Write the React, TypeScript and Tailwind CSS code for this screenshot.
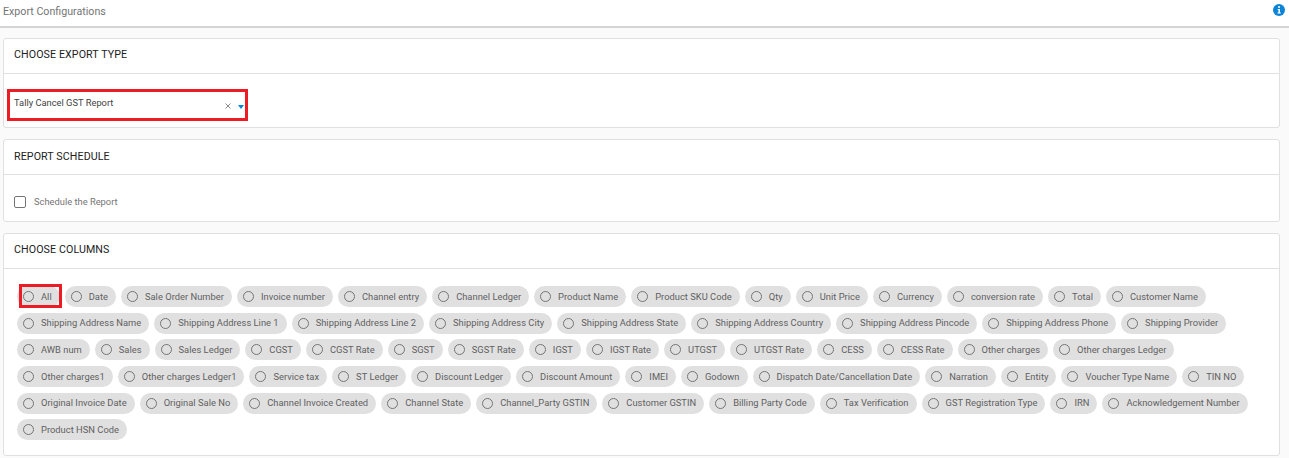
const rows = [
  ["All","Date","Sale Order Number","Invoice number","Channel entry","Channel Ledger","Product Name","Product SKU Code","Qty","Unit Price","Currency","conversion rate","Total","Customer Name"],
  ["Shipping Address Name","Shipping Address Line 1","Shipping Address Line 2","Shipping Address City","Shipping Address State","Shipping Address Country","Shipping Address Pincode","Shipping Address Phone","Shipping Provider"],
  ["AWB num","Sales","Sales Ledger","CGST","CGST Rate","SGST","SGST Rate","IGST","IGST Rate","UTGST","UTGST Rate","CESS","CESS Rate","Other charges","Other charges Ledger"],
  ["Other charges1","Other charges Ledger1","Service tax","ST Ledger","Discount Ledger","Discount Amount","IMEI","Godown","Dispatch Date/Cancellation Date","Narration","Entity","Voucher Type Name","TIN NO"],
  ["Original Invoice Date","Original Sale No","Channel Invoice Created","Channel State","Channel_Party GSTIN","Customer GSTIN","Billing Party Code","Tax Verification","GST Registration Type","IRN","Acknowledgement Number"],
  ["Product HSN Code"],
];

function Chip({ label, boxed }: { label: string; boxed?: boolean }) {
  return (
    <div className="relative flex h-[21px] items-center rounded-full bg-[#e0e0e0] pl-[6px] pr-[8px]">
      <span className="mr-[7px] h-[11px] w-[11px] rounded-full border border-[#757575]" />
      <span className="whitespace-nowrap text-[9.33px] tracking-[0.02px] text-[#616161]">{label}</span>
      {boxed && <span className="absolute left-[2px] top-[-2px] h-[24px] w-[43px] border-[3px] border-[#ed1c24]" />}
    </div>
  );
}

function Card({ title, children, className, titleClass }: { title: string; children: React.ReactNode; className: string; titleClass: string }) {
  return (
    <section className={"rounded-[3px] border border-[#e0e0e0] bg-white " + className}>
      <h2 className={"flex h-[35px] items-center border-b border-[#e0e0e0] px-[10px] text-[10.67px] font-normal tracking-[0.1px] text-[#212121] " + titleClass}>{title}</h2>
      {children}
    </section>
  );
}

export default function App() {
  return (
    <div className="h-[458px] overflow-hidden bg-[#fafafa] font-['Roboto',sans-serif]">
      <header className="flex h-[28px] items-center justify-between border-b-2 border-[#d4d4d4] bg-white pb-[2px] pl-[3px] pr-[4px]">
        <span className="text-[10.67px] text-[#757575]">Export Configurations</span>
        <svg width="12" height="12" viewBox="0 0 12 12" className="mb-[4px]">
          <circle cx="6" cy="6" r="6" fill="#0a84d6" />
          <path d="M5 2.2h2v1.6H5zM4.7 5h2.3v3.4h.8v1H4.5v-1h.9V6h-.7z" fill="#fff" />
        </svg>
      </header>
      <div className="flex flex-col gap-[11px] pl-[3px] pr-[9px] pt-[10px]">
        <Card title="CHOOSE EXPORT TYPE" className="h-[90px]" titleClass="pb-[2px]">
          <div className="pl-[3px] pt-[15px]">
            <div className="relative flex h-[32px] w-[241px] border-[3px] border-[#ed1c24] pl-[4px] pt-[4px] text-[9.33px] text-[#424242]">
              Tally Cancel GST Report
              <svg className="absolute left-[214px] top-[10px]" width="8" height="8" viewBox="0 0 8 8">
                <path d="M1.5 1.5l5 5M6.5 1.5l-5 5" stroke="#8a8a8a" strokeWidth="1" />
              </svg>
              <span className="absolute left-[228px] top-[13px] h-0 w-0 border-x-[3.5px] border-t-[4px] border-x-transparent border-t-[#0a84d6]" />
            </div>
          </div>
        </Card>
        <Card title="REPORT SCHEDULE" className="h-[83px]" titleClass="">
          <label className="flex items-center pl-[10px] pt-[20px] text-[9.33px] text-[#757575]">
            <span className="mr-[8px] h-[12px] w-[12px] rounded-[2px] border border-[#757575]" />
            Schedule the Report
          </label>
        </Card>
        <Card title="CHOOSE COLUMNS" className="h-[223px]" titleClass="pb-[2px]">
          <div className="flex flex-col gap-[5.7px] pl-[13px] pt-[17px]">
            {rows.map((row, i) => (
              <div key={i} className="flex gap-[5px]">
                {row.map((l) => <Chip key={l} label={l} boxed={l === "All"} />)}
              </div>
            ))}
          </div>
        </Card>
      </div>
    </div>
  );
}
